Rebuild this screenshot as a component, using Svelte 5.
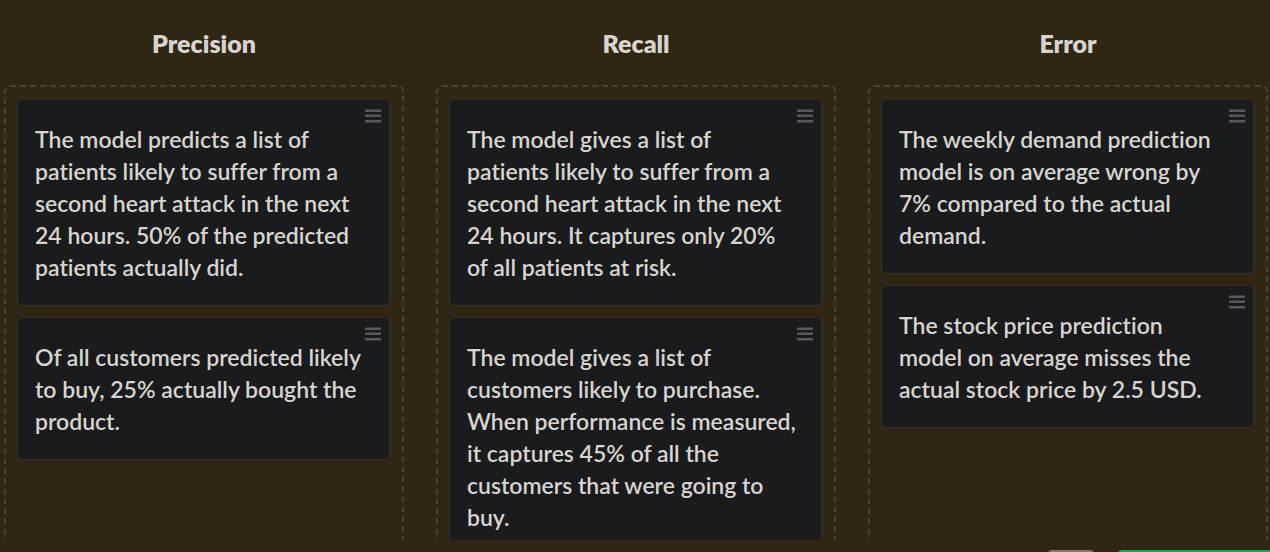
<script>
  const columns = [
    {
      title: 'Precision',
      cards: [
        'The model predicts a list of\npatients likely to suffer from a\nsecond heart attack in the next\n24 hours. 50% of the predicted\npatients actually did.',
        'Of all customers predicted likely\nto buy, 25% actually bought the\nproduct.'
      ]
    },
    {
      title: 'Recall',
      cards: [
        'The model gives a list of\npatients likely to suffer from a\nsecond heart attack in the next\n24 hours. It captures only 20%\nof all patients at risk.',
        'The model gives a list of\ncustomers likely to purchase.\nWhen performance is measured,\nit captures 45% of all the\ncustomers that were going to\nbuy.'
      ]
    },
    {
      title: 'Error',
      cards: [
        'The weekly demand prediction\nmodel is on average wrong by\n7% compared to the actual\ndemand.',
        'The stock price prediction\nmodel on average misses the\nactual stock price by 2.5 USD.'
      ]
    }
  ];
</script>

<div class="page">
  <main class="board">
    {#each columns as column}
      <section class="column">
        <h2>{column.title}</h2>
        <div class="zone">
          {#each column.cards as text}
            <article class="card">
              <p>{text}</p>
              <button class="handle" aria-label="Move card">
                <svg viewBox="0 0 16 14" aria-hidden="true">
                  <path d="M0 0.5h16v2.5H0zM0 5.5h16v2.5H0zM0 11h16v2.5H0z" />
                </svg>
              </button>
            </article>
          {/each}
        </div>
      </section>
    {/each}
  </main>
  <footer>
    <button class="hint" aria-label="Hint"></button>
    <button class="submit" aria-label="Submit answer"></button>
  </footer>
</div>

<style>
  :global(body) {
    margin: 0;
    background: #302614;
  }
  .page {
    display: flex;
    flex-direction: column;
    height: 100vh;
    overflow: hidden;
    background: #302614;
    color: #d7d4cf;
    font-family: Lato, sans-serif;
    font-variant-ligatures: none;
  }
  .board {
    flex: 1;
    min-height: 0;
    display: grid;
    grid-template-columns: repeat(3, minmax(0, 1fr));
    gap: 32px;
    padding: 0 2px 0 4px;
    overflow: hidden;
  }
  .column {
    display: flex;
    flex-direction: column;
  }
  h2 {
    margin: 0;
    padding: 27px 0 26px;
    font-size: 25px;
    line-height: 32px;
    font-weight: 800;
    text-align: center;
  }
  .zone {
    flex: 1 0 auto;
    display: flex;
    flex-direction: column;
    gap: 11px;
    padding: 12px 12px 32px 11px;
    border: 2px dashed #4a4130;
    border-radius: 6px;
  }
  .card {
    position: relative;
    padding: 23px 16px 22px 17px;
    border: 1px solid #303030;
    border-radius: 5px;
    background: #1a1b1c;
  }
  p {
    margin: 0;
    font-size: 23px;
    line-height: 32px;
    font-weight: 600;
    white-space: pre-line;
  }
  .handle {
    position: absolute;
    top: 9px;
    right: 8px;
    width: 16px;
    height: 14px;
    padding: 0;
    border: 0;
    background: none;
    cursor: grab;
  }
  .handle svg {
    display: block;
    width: 16px;
    height: 14px;
    fill: #57585a;
  }
  footer {
    flex: 0 0 12px;
    box-sizing: border-box;
    display: flex;
    justify-content: flex-end;
    align-items: flex-start;
    gap: 24px;
    height: 12px;
    padding-top: 10px;
    overflow: hidden;
  }
  footer button {
    height: 44px;
    padding: 0;
    border: 0;
  }
  .hint {
    width: 46px;
    border-radius: 4px 4px 0 0;
    background: #857865;
  }
  .submit {
    width: 152px;
    border-radius: 4px 0 0 0;
    background: #16a751;
  }
</style>
